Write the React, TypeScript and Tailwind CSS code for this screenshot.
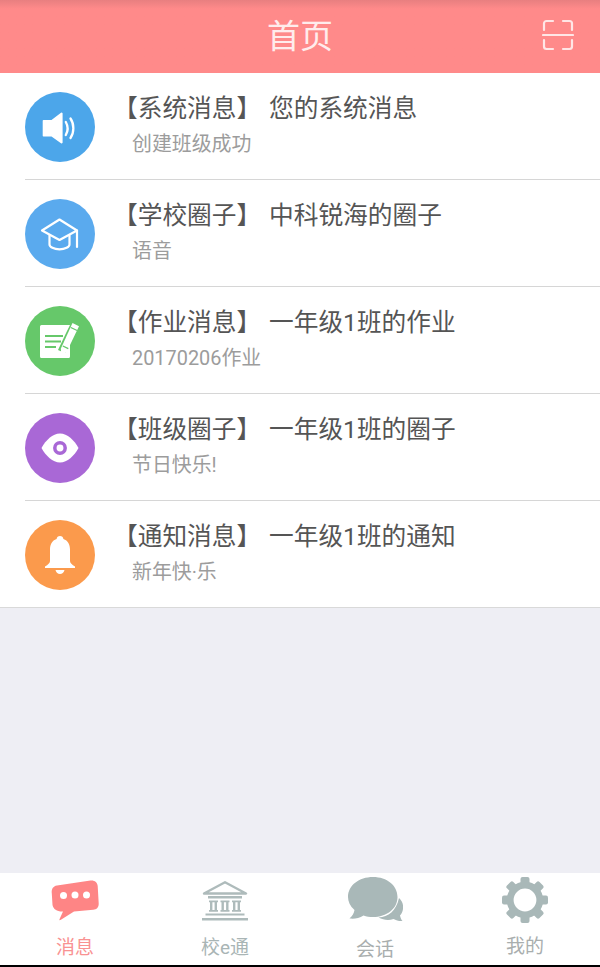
const baseFont = "font-['Roboto','Noto_Sans_CJK_SC','Noto_Sans',sans-serif]";

function Speaker() {
  return (
    <svg width="70" height="70" viewBox="0 0 70 70" fill="none">
      <path d="M18.500 28h8L36 20.800a1 1 0 0 1 1.600.800v28.800a1 1 0 0 1-1.600.800L26.500 44.500h-8a.8.800 0 0 1-.8-.8V28.800a.8.800 0 0 1 .8-.8z" fill="#fff" />
      <path d="M40.800 30c2.300 4 2.300 9 0 13" stroke="#fff" strokeWidth="2.300" strokeLinecap="round" />
      <path d="M45.500 26.500c3.800 5.500 3.800 14 0 19.500" stroke="#fff" strokeWidth="2.300" strokeLinecap="round" />
    </svg>
  );
}

function Cap() {
  return (
    <svg width="70" height="70" viewBox="0 0 70 70" fill="none" stroke="#fff" strokeWidth="2.200" strokeLinejoin="round" strokeLinecap="round">
      <path d="M17 31.500 34.500 20.500 52 31.500 34.500 41z" />
      <path d="M24.500 36.500v9c0 2.500 4.500 4.800 10 4.800s10-2.300 10-4.800v-9" />
      <path d="M52 31.500V48" />
    </svg>
  );
}

function Note() {
  return (
    <svg width="70" height="70" viewBox="0 0 70 70" fill="none">
      <path d="M15 20.500A1.500 1.500 0 0 1 16.500 19H45l-3 6-9 19 7 3 5-10v13.500a1.500 1.500 0 0 1-1.500 1.500h-27a1.500 1.500 0 0 1-1.500-1.500z" fill="#fff" />
      <path d="M20 30h18M20 35.500h16M20 41h11" stroke="#66c86a" strokeWidth="1.800" />
      <path d="M47.500 17l6.500 3.200-12 25-5.500 5-.7-7.400z" fill="#fff" />
      <path d="M45.800 21.500l6.300 3M37.800 40l5.500 2.700" stroke="#66c86a" strokeWidth="1.300" />
    </svg>
  );
}

function Eye() {
  return (
    <svg width="70" height="70" viewBox="0 0 70 70" fill="none">
      <path d="M16.500 35C21 27 27.500 20.500 35 20.500S49 27 53.500 35C49 43 42.500 49.500 35 49.500S21 43 16.500 35z" fill="#fff" />
      <circle cx="35" cy="35" r="5.200" stroke="#a968d6" strokeWidth="3.500" fill="#fff" />
    </svg>
  );
}

function Bell() {
  return (
    <svg width="70" height="70" viewBox="0 0 70 70" fill="none">
      <path d="M35 16c1.900 0 3.200 1.200 3.400 3 4.600 1.500 6.600 5.500 6.600 10.500V41c0 1.800 2 3.800 5 5.500v1.500H20v-1.500c3-1.700 5-3.700 5-5.500V29.500c0-5 2-9 6.600-10.500.2-1.800 1.500-3 3.400-3z" fill="#fff" />
      <path d="M30.500 50h9c-.7 2.600-2.300 4-4.500 4s-3.800-1.400-4.500-4z" fill="#fff" />
    </svg>
  );
}

function Scan() {
  return (
    <svg width="32" height="32" viewBox="0 0 32 32" fill="none" stroke="#ffe6e6" strokeWidth="2.200" strokeLinecap="round" strokeLinejoin="round">
      <path d="M11 2H4.500A2.500 2.500 0 0 0 2 4.500V11" />
      <path d="M21 2h6.500A2.500 2.500 0 0 1 30 4.500V11" />
      <path d="M11 30H4.500A2.500 2.500 0 0 1 2 27.500V21" />
      <path d="M21 30h6.500a2.500 2.500 0 0 0 2.500-2.500V21" />
      <path d="M1 16h30" />
    </svg>
  );
}

function Chat() {
  return (
    <svg width="48" height="41" viewBox="0 0 48 41" fill="none">
      <path d="M6 5.500 39.500.6c4-.5 6.800 1.700 7.200 5.400l1 17.500c.2 3.800-2 6-5.500 6.300L23 31.500 9.500 40c-.8.400-1.300 0-1-.8l3.500-7.700c-6 .2-9.500-2-10.500-6.500L.8 13.500C.3 9 2 6.200 6 5.500z" fill="#fe8585" />
      <circle cx="12.500" cy="15.500" r="3.500" fill="#fff" />
      <circle cx="24" cy="15" r="3.500" fill="#fff" />
      <circle cx="35.500" cy="15" r="3.500" fill="#fff" />
    </svg>
  );
}

function Bank() {
  return (
    <svg width="46" height="40" viewBox="0 0 46 40" fill="none">
      <path d="M23 1.300 44 12.500H2z" stroke="#aebbbb" strokeWidth="2.400" strokeLinejoin="round" fill="none" />
      <path d="M6 15h34v2.500H6z" fill="#aebbbb" />
      <path d="M7 19.500h9v1.800H7zM8 21h2.400v8.500H8zM12.600 21H15v8.500h-2.400zM7 29h9v1.800H7z" fill="#aebbbb" />
      <path d="M18.500 19.500h9v1.800h-9zM19.500 21h2.400v8.500h-2.400zM24.100 21h2.400v8.500h-2.400zM18.500 29h9v1.800h-9z" fill="#aebbbb" />
      <path d="M30 19.500h9v1.800h-9zM31 21h2.400v8.500H31zM35.600 21H38v8.500h-2.400zM30 29h9v1.800h-9z" fill="#aebbbb" />
      <path d="M3.500 32.500h39v2h-39zM0 37h46v2.500H0z" fill="#aebbbb" />
    </svg>
  );
}

function Talk() {
  return (
    <svg width="56" height="48" viewBox="0 0 56 48" fill="none">
      <path d="M26 0c14 0 24.500 8.500 24.500 20 0 12-11 20-24.500 20-3.500 0-6.500-.5-9.500-1.500C12 41.500 7 42 2.500 41.500 5.500 39 7 36 7.500 33 3 29 1 24.500 1 20 1 8.500 12 0 26 0z" fill="#a9b8b8" />
      <path d="M52 21c3.500 3 4.500 7 4 11-.4 3-1.500 5-3 6.500.4 2 1.300 4.300 2.500 5.500-3 .3-6.500-.5-9-2-4.500 1.500-10 1.200-15-1.500 10-1 17.500-6 20.500-19.500z" fill="#a9b8b8" />
    </svg>
  );
}

function Gear() {
  return (
    <svg width="46" height="46" viewBox="0 0 46 46" fill="none">
      <circle cx="23" cy="23" r="14.800" stroke="#a9b8b8" strokeWidth="6.800" />
      {[0, 45, 90, 135, 180, 225, 270, 315].map((a) => (
        <rect key={a} x="18.500" y="0" width="9" height="9" rx="2" fill="#a9b8b8" transform={`rotate(${a} 23 23)`} />
      ))}
    </svg>
  );
}

const rows = [
  { color: "bg-[#4ca6ea]", icon: <Speaker />, tag: "【系统消息】", title: "您的系统消息", sub: "创建班级成功" },
  { color: "bg-[#5aaaee]", icon: <Cap />, tag: "【学校圈子】", title: "中科锐海的圈子", sub: "语音" },
  { color: "bg-[#66c86a]", icon: <Note />, tag: "【作业消息】", title: "一年级1班的作业", sub: "20170206作业" },
  { color: "bg-[#a968d6]", icon: <Eye />, tag: "【班级圈子】", title: "一年级1班的圈子", sub: "节日快乐!" },
  { color: "bg-[#fb9a4c]", icon: <Bell />, tag: "【通知消息】", title: "一年级1班的通知", sub: "新年快·乐" },
];

const tabs = [
  { icon: <Chat />, label: "消息", box: "h-[47px] pt-[7px]", text: "text-[#f99292] mt-[16px]" },
  { icon: <Bank />, label: "校e通", box: "h-[47px] pt-[8px]", text: "text-[#a9b5b5] mt-[16px]" },
  { icon: <Talk />, label: "会话", box: "h-[52px] pt-[4px]", text: "text-[#a9aeae] mt-[13px]" },
  { icon: <Gear />, label: "我的", box: "h-[52px] pt-[4px]", text: "text-[#a9aeae] mt-[10px]" },
];

export default function App() {
  return (
    <div className={`flex h-[967px] w-[600px] flex-col overflow-hidden bg-[#eeeef4] ${baseFont}`}>
      <header className="relative flex h-[73px] shrink-0 items-center justify-center bg-gradient-to-b from-[#e87f80] from-0% via-[#ff8a8a] via-[12%] to-[#ff8a8a]">
        <h1 className="text-[33px] font-normal leading-none text-[#ffecec]">首页</h1>
        <div className="absolute right-[26px] top-[19px] flex">
          <Scan />
        </div>
      </header>

      <ul className="border-b border-[#d9d9d9] bg-white">
        {rows.map((row, i) => {
          const last = i === rows.length - 1;
          return (
            <li key={row.tag} className={`pl-[25px] ${last ? "h-[106px]" : "h-[107px]"}`}>
              <div className={`flex h-full items-start ${last ? "" : "border-b border-[#d6d6d6]"}`}>
                <div className={`flex h-[70px] w-[70px] shrink-0 items-center justify-center rounded-full ${last ? "mt-[18.500px]" : "mt-[19px]"} ${row.color}`}>
                  {row.icon}
                </div>
                <div className="ml-[18px] min-w-0">
                  <div className="mt-[20.500px] flex h-[32px] items-center text-[24.700px] leading-none text-[#555555]">
                    <span className="w-[156px] shrink-0 whitespace-nowrap">{row.tag}</span>
                    <span className="whitespace-nowrap">{row.title}</span>
                  </div>
                  <p className="ml-[19px] mt-[5.500px] text-[19.900px] leading-[28px] text-[#9c9c9c]">{row.sub}</p>
                </div>
              </div>
            </li>
          );
        })}
      </ul>

      <div className="flex-1" />

      <nav className="grid h-[92px] shrink-0 grid-cols-4 bg-white">
        {tabs.map((t) => (
          <div key={t.label} className="flex flex-col items-center">
            <div className={`flex items-start justify-center ${t.box}`}>{t.icon}</div>
            <span className={`text-[19px] leading-[24px] ${t.text}`}>{t.label}</span>
          </div>
        ))}
      </nav>
      <div className="h-[2px] shrink-0 bg-black" />
    </div>
  );
}
